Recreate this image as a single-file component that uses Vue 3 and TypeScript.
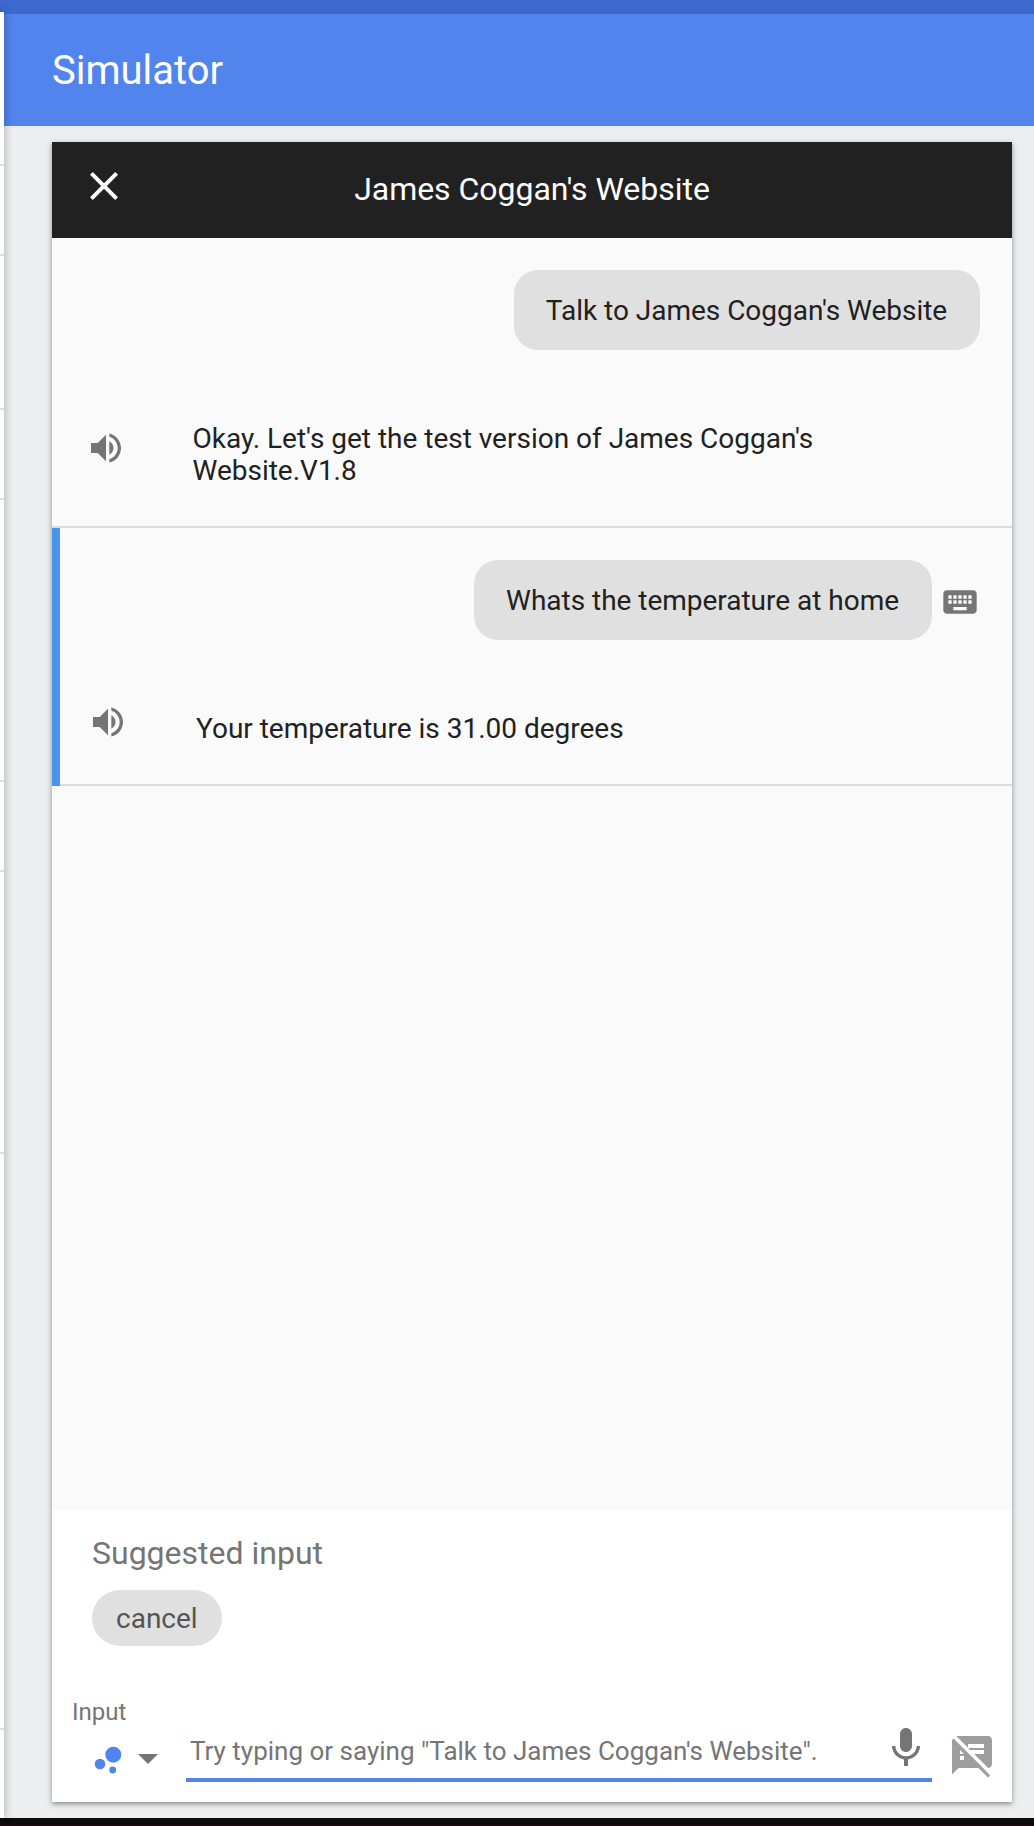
<script setup lang="ts">
import { ref } from 'vue'

interface Turn {
  query: string
  reply: string
  typed: boolean
  active: boolean
}

const title = "James Coggan's Website"
const turns: Turn[] = [
  {
    query: "Talk to James Coggan's Website",
    reply: "Okay. Let's get the test version of James Coggan's Website.V1.8",
    typed: false,
    active: false,
  },
  {
    query: 'Whats the temperature at home',
    reply: 'Your temperature is 31.00 degrees',
    typed: true,
    active: true,
  },
]
const suggestions = ['cancel']
const message = ref('')
const rowHeights = [152, 88, 152, 88, 280, 88, 280, 574]
</script>

<template>
  <div class="page">
    <div class="status"></div>
    <div class="main">
      <aside class="side">
        <div v-for="(h, i) in rowHeights" :key="i" class="side-row" :style="{ height: h + 'px' }"></div>
      </aside>
      <div class="content">
        <header class="toolbar"><h1>Simulator</h1></header>
        <section class="card">
          <div class="card-head">
            <svg class="close" viewBox="0 0 24 24"><path d="M19 6.41L17.59 5 12 10.59 6.41 5 5 6.41 10.59 12 5 17.59 6.41 19 12 13.41 17.59 19 19 17.59 13.41 12z" /></svg>
            <h2>{{ title }}</h2>
          </div>
          <div class="chat">
            <article v-for="t in turns" :key="t.query" class="turn" :class="{ active: t.active }">
              <div class="query">
                <div class="bubble">{{ t.query }}</div>
                <svg v-if="t.typed" class="keyboard" viewBox="0 0 24 24"><path d="M20 5H4c-1.1 0-1.99.9-1.99 2L2 17c0 1.1.9 2 2 2h16c1.1 0 2-.9 2-2V7c0-1.1-.9-2-2-2zm-9 3h2v2h-2V8zm0 3h2v2h-2v-2zM8 8h2v2H8V8zm0 3h2v2H8v-2zm-1 2H5v-2h2v2zm0-3H5V8h2v2zm9 7H8v-2h8v2zm0-4h-2v-2h2v2zm0-3h-2V8h2v2zm3 3h-2v-2h2v2zm0-3h-2V8h2v2z" /></svg>
              </div>
              <div class="reply">
                <svg class="speaker" viewBox="0 0 24 24"><path d="M3 9v6h4l5 5V4L7 9H3zm13.5 3c0-1.77-1.02-3.29-2.5-4.03v8.05c1.48-.73 2.5-2.25 2.5-4.02zM14 3.23v2.06c2.89.86 5 3.54 5 6.71s-2.11 5.85-5 6.71v2.06c4.01-.91 7-4.49 7-8.77s-2.99-7.86-7-8.77z" /></svg>
                <p>{{ t.reply }}</p>
              </div>
            </article>
          </div>
          <footer class="foot">
            <div class="suggested">Suggested input</div>
            <div class="chips"><button v-for="s in suggestions" :key="s" class="chip" type="button">{{ s }}</button></div>
            <div class="label">Input</div>
            <div class="entry">
              <svg class="assistant" viewBox="0 0 30 30"><circle cx="19.3" cy="8.7" r="8" /><circle cx="6" cy="18" r="5.3" /><circle cx="18.7" cy="24" r="3.4" /></svg>
              <svg class="caret" viewBox="0 0 20 10"><path d="M0 0h20L10 10z" /></svg>
              <div class="field">
                <input v-model="message" type="text" placeholder="Try typing or saying &quot;Talk to James Coggan's Website&quot;." />
                <svg class="mic" viewBox="0 0 24 24"><path d="M12 14c1.66 0 2.99-1.34 2.99-3L15 5c0-1.66-1.34-3-3-3S9 3.34 9 5v6c0 1.66 1.34 3 3 3zm5.3-3c0 3-2.54 5.1-5.3 5.1S6.7 14 6.7 11H5c0 3.41 2.72 6.23 6 6.72V21h2v-3.28c3.28-.48 6-3.3 6-6.72h-1.7z" /></svg>
              </div>
              <svg class="notes" viewBox="0 0 24 24"><path d="M10.54 11L7.54 8 2.8 3.2 1.8 4.2 2.01 4.8 2 21.3 5.3 18h9.9l4.8 4.8 1.1-1.1L17.54 18l-7-7zM8 14H6v-2h2v2zm-2-3V9l2 2H6zm14-9H4.08L10 7.92V6h8v2h-7.92l1 1H18v2h-4.92l6.99 6.99C21.14 17.95 22 17.08 22 16V4c0-1.1-.9-2-2-2z" /></svg>
            </div>
          </footer>
        </section>
      </div>
    </div>
    <div class="desktop"></div>
  </div>
</template>

<style>
html,
body {
  margin: 0;
  overflow: hidden;
}
</style>

<style scoped>
* {
  box-sizing: border-box;
}
.page {
  width: 1034px;
  height: 1826px;
  display: flex;
  flex-direction: column;
  overflow: hidden;
  background: #edeef0;
  font-family: Roboto, sans-serif;
  color: #212121;
}
.status {
  height: 14px;
  flex: none;
  background: #3e68cf;
}
.main {
  height: 1804px;
  flex: none;
  display: flex;
}
.side {
  width: 4px;
  height: 1806px;
  flex: none;
  margin-top: -2px;
  background: #fff;
  box-shadow: 0 0 8px rgba(0, 0, 0, 0.42);
  position: relative;
  z-index: 1;
}
.side-row {
  box-sizing: content-box;
  border-bottom: 2px solid #e0e0e0;
}
.content {
  flex: 1;
}
.toolbar {
  height: 112px;
  padding: 2px 0 0 48px;
  display: flex;
  align-items: center;
  background: #5184ec;
}
h1,
h2,
p {
  margin: 0;
  font-weight: 400;
}
h1 {
  font-size: 40px;
  line-height: 48px;
  color: #fff;
}
.card {
  width: 960px;
  height: 1660px;
  margin: 16px 0 0 48px;
  display: flex;
  flex-direction: column;
  background: #fff;
  box-shadow: 0 2px 4px rgba(0, 0, 0, 0.3), 0 2px 8px rgba(0, 0, 0, 0.15);
}
.card-head {
  height: 96px;
  flex: none;
  display: flex;
  align-items: center;
  padding: 0 76px 2px 28px;
  background: #212121;
}
.close {
  width: 48px;
  height: 48px;
  margin-top: -6px;
  fill: #fff;
}
h2 {
  flex: 1;
  text-align: center;
  font-size: 32px;
  line-height: 40px;
  letter-spacing: -0.03px;
  color: #fff;
}
.chat {
  height: 1272px;
  flex: none;
  background: #fafafa;
}
.turn {
  padding: 32px 32px 41px 34px;
  background: linear-gradient(#dcdcdc, #dcdcdc) bottom / 100% 2px no-repeat;
}
.turn.active {
  padding-left: 36px;
  background:
    linear-gradient(#4795ec, #4795ec) left / 8px 100% no-repeat,
    linear-gradient(#dcdcdc, #dcdcdc) bottom / 100% 2px no-repeat;
}
.query {
  display: flex;
  justify-content: flex-end;
  align-items: center;
}
.bubble {
  padding: 25px 32.8px 23px 32px;
  border-radius: 24px;
  background: #e0e0e0;
  font-size: 28px;
  line-height: 32px;
  letter-spacing: -0.02px;
}
.active .bubble {
  padding-right: 33px;
}
.keyboard {
  width: 40px;
  height: 40px;
  margin: 4px 0.5px 0 7.5px;
  fill: #757575;
}
.reply {
  margin-top: 73px;
  display: flex;
  align-items: flex-start;
  font-size: 28px;
  line-height: 32px;
  letter-spacing: -0.01px;
}
.speaker {
  width: 40px;
  height: 40px;
  margin: 5px 66.5px -20px 0;
  flex: none;
  fill: #757575;
}
.active .speaker {
  margin: -11px 68px 0 0;
}
.reply p {
  width: 650px;
}
.foot {
  flex: 1;
  padding: 24px 20px 0;
  color: #757575;
}
.suggested {
  padding-left: 20px;
  font-size: 32px;
  line-height: 38px;
}
.chips {
  display: flex;
  padding: 18px 0 0 20px;
}
.chip {
  height: 56px;
  padding: 2px 24px 0;
  border: 0;
  border-radius: 28px;
  background: #e0e0e0;
  color: #555;
  font: 400 28px/54px Roboto, sans-serif;
}
.label {
  margin-top: 52px;
  font-size: 24px;
  line-height: 28px;
}
.entry {
  display: flex;
  align-items: flex-start;
}
.entry > * {
  flex: none;
}
.assistant {
  width: 30px;
  height: 30px;
  margin: 20px 0 0 22px;
  fill: #5184ec;
}
.caret {
  width: 20px;
  height: 10px;
  margin: 28px 28px 0 14px;
  fill: #757575;
}
.field {
  width: 746px;
  height: 60px;
  margin-top: -4px;
  display: flex;
  border-bottom: 4px solid #5184ec;
}
input {
  flex: 1;
  min-width: 0;
  height: 32px;
  margin-top: 13px;
  padding: 0 0 0 4px;
  border: 0;
  outline: 0;
  background: none;
  font: 400 26px/32px Roboto, sans-serif;
  color: #212121;
}
input::placeholder {
  color: #757575;
  opacity: 1;
}
.mic {
  width: 48px;
  height: 48px;
  margin: 2px 2.5px 0 0;
  fill: #757575;
}
.notes {
  width: 48px;
  height: 48px;
  margin: 6px 0 0 15.5px;
  fill: #9e9e9e;
}
.desktop {
  height: 8px;
  flex: none;
  background: linear-gradient(#0c0a0a 0 6px, #160b0f 6px);
}
</style>
